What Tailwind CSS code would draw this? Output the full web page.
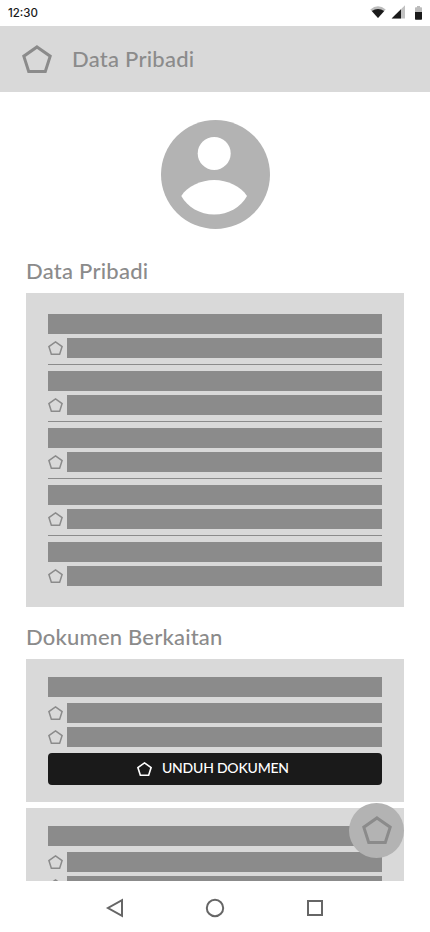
<!DOCTYPE html>
<html lang="id">
<head>
<meta charset="utf-8">
<meta name="viewport" content="width=device-width, initial-scale=1">
<title>Data Pribadi</title>
<script src="https://cdn.jsdelivr.net/npm/@tailwindcss/browser@4"></script>
</head>
<body class="bg-white font-['Lato',sans-serif] text-[#8b8b8b]">
<svg class="hidden">
  <symbol id="pentagon" viewBox="0 0 30 28"><path d="M15 1.9 28.2 11.2 23.3 26.5H6.7L1.8 11.2Z" fill="none" stroke="currentColor"/></symbol>
</svg>
<div class="relative flex h-[932px] w-[430px] flex-col overflow-hidden">
  <div class="flex h-[26px] shrink-0 items-center justify-between pl-2 pr-2">
    <span class="font-['Inter',sans-serif] text-[11.5px] leading-3 font-medium text-[#1a1a1a]">12:30</span>
    <svg class="h-[26px] w-[56px]" viewBox="366 0 56 26">
      <path d="M370.300 9.500Q378 3.200 385.700 9.500L378 18Z" fill="#bcbcbc"/>
      <path d="M371.800 11.1Q378 7 384.200 11.1L378 18Z" fill="#1a1a1a"/>
      <path d="M405 5.200V18.600H391.600Z" fill="#c2c2c2"/>
      <path d="M401 9.200V18.600H391.600Z" fill="#1a1a1a"/>
      <path d="M415 12V8q0-.7.700-.7H417V6h3v1.300h1.300q.7 0 .7.700v4Z" fill="#bcbcbc"/>
      <path d="M415 12h7v7q0 .7-.7.700h-5.600q-.7 0-.7-.7Z" fill="#1a1a1a"/>
    </svg>
  </div>
  <header class="flex h-[66px] shrink-0 items-center bg-[#d9d9d9] pl-[22px]">
    <svg class="h-7 w-[30px]" stroke-width="3"><use href="#pentagon"/></svg>
    <h1 class="ml-5 text-[22px] leading-7 font-medium tracking-[0.25px] whitespace-nowrap">Data Pribadi</h1>
  </header>
  <main class="h-[789px] shrink-0 overflow-hidden px-[26px] pt-7">
    <svg class="ml-[135px] block size-[109px]" viewBox="0 0 109 109">
      <circle cx="54.500" cy="54.500" r="54.500" fill="#b3b3b3"/>
      <circle cx="53.200" cy="33.400" r="16.500" fill="#fff"/>
      <path d="M20.300 76C26 66.500 40 60 53.200 60S80 66.500 86 76C80 87 67.500 94.500 53.200 94.500S26.400 87 20.300 76Z" fill="#fff"/>
    </svg>
    <h2 class="mt-7 flex h-9 items-start text-[22px] leading-7 font-medium tracking-[0.25px] whitespace-nowrap">Data Pribadi</h2>
    <section class="flex h-[314px] flex-col gap-1.5 bg-[#d9d9d9] px-[22px] pt-[21px]">
      <div class="flex flex-col gap-1"><div class="h-5 bg-[#8b8b8b]"></div><div class="flex h-5 gap-1"><svg class="mt-[3px] h-3.5 w-[15px]" stroke-width="3"><use href="#pentagon"/></svg><div class="flex-1 bg-[#8b8b8b]"></div></div></div>
      <div class="h-px shrink-0 bg-[#8b8b8b]"></div>
      <div class="flex flex-col gap-1"><div class="h-5 bg-[#8b8b8b]"></div><div class="flex h-5 gap-1"><svg class="mt-[3px] h-3.5 w-[15px]" stroke-width="3"><use href="#pentagon"/></svg><div class="flex-1 bg-[#8b8b8b]"></div></div></div>
      <div class="h-px shrink-0 bg-[#8b8b8b]"></div>
      <div class="flex flex-col gap-1"><div class="h-5 bg-[#8b8b8b]"></div><div class="flex h-5 gap-1"><svg class="mt-[3px] h-3.5 w-[15px]" stroke-width="3"><use href="#pentagon"/></svg><div class="flex-1 bg-[#8b8b8b]"></div></div></div>
      <div class="h-px shrink-0 bg-[#8b8b8b]"></div>
      <div class="flex flex-col gap-1"><div class="h-5 bg-[#8b8b8b]"></div><div class="flex h-5 gap-1"><svg class="mt-[3px] h-3.5 w-[15px]" stroke-width="3"><use href="#pentagon"/></svg><div class="flex-1 bg-[#8b8b8b]"></div></div></div>
      <div class="h-px shrink-0 bg-[#8b8b8b]"></div>
      <div class="flex flex-col gap-1"><div class="h-5 bg-[#8b8b8b]"></div><div class="flex h-5 gap-1"><svg class="mt-[3px] h-3.5 w-[15px]" stroke-width="3"><use href="#pentagon"/></svg><div class="flex-1 bg-[#8b8b8b]"></div></div></div>
    </section>
    <h2 class="mt-4 flex h-9 items-start text-[22px] leading-7 font-medium tracking-[0.2px] whitespace-nowrap">Dokumen Berkaitan</h2>
    <section class="h-[143px] bg-[#d9d9d9] px-[22px] pt-[18px]">
      <div class="h-5 bg-[#8b8b8b]"></div>
      <div class="mt-1.5 flex h-5 gap-1"><svg class="mt-[3px] h-3.5 w-[15px]" stroke-width="3"><use href="#pentagon"/></svg><div class="flex-1 bg-[#8b8b8b]"></div></div>
      <div class="mt-1 flex h-5 gap-1"><svg class="mt-[3px] h-3.5 w-[15px]" stroke-width="3"><use href="#pentagon"/></svg><div class="flex-1 bg-[#8b8b8b]"></div></div>
      <button class="mt-1.5 flex h-8 w-full items-center rounded bg-[#1a1a1a] pl-[89px] text-white">
        <svg class="h-3.5 w-[15px]" stroke-width="3.2"><use href="#pentagon"/></svg>
        <span class="ml-2.5 pb-0.5 text-[14px] leading-5 font-medium tracking-[-0.22px] whitespace-nowrap">UNDUH DOKUMEN</span>
      </button>
    </section>
    <section class="mt-1.5 h-[143px] bg-[#d9d9d9] px-[22px] pt-[18px]">
      <div class="h-5 bg-[#8b8b8b]"></div>
      <div class="mt-1.5 flex h-5 gap-1"><svg class="mt-[3px] h-3.5 w-[15px]" stroke-width="3"><use href="#pentagon"/></svg><div class="flex-1 bg-[#8b8b8b]"></div></div>
      <div class="mt-1 flex h-5 gap-1"><svg class="mt-[3px] h-3.5 w-[15px]" stroke-width="3"><use href="#pentagon"/></svg><div class="flex-1 bg-[#8b8b8b]"></div></div>
    </section>
  </main>
  <button class="absolute top-[803px] left-[349px] flex size-[55px] items-center justify-center rounded-full bg-[#b3b3b3] pb-px">
    <svg class="h-7 w-[30px]" stroke-width="3"><use href="#pentagon"/></svg>
  </button>
  <nav class="flex h-[51px] shrink-0 items-center justify-center gap-[76px] pb-px text-[#666]">
    <svg class="size-6 translate-y-[2px]" viewBox="0 0 24 24" fill="none" stroke="currentColor" stroke-width="2"><path d="M19 4.200V19.800L5 12Z"/></svg>
    <svg class="size-6 translate-y-[2px]" viewBox="0 0 24 24" fill="none" stroke="currentColor" stroke-width="2"><circle cx="12" cy="12" r="8.200"/></svg>
    <svg class="size-6 translate-y-[2px]" viewBox="0 0 24 24" fill="none" stroke="currentColor" stroke-width="2"><path d="M5 5H19V19H5Z"/></svg>
  </nav>
</div>
</body>
</html>
